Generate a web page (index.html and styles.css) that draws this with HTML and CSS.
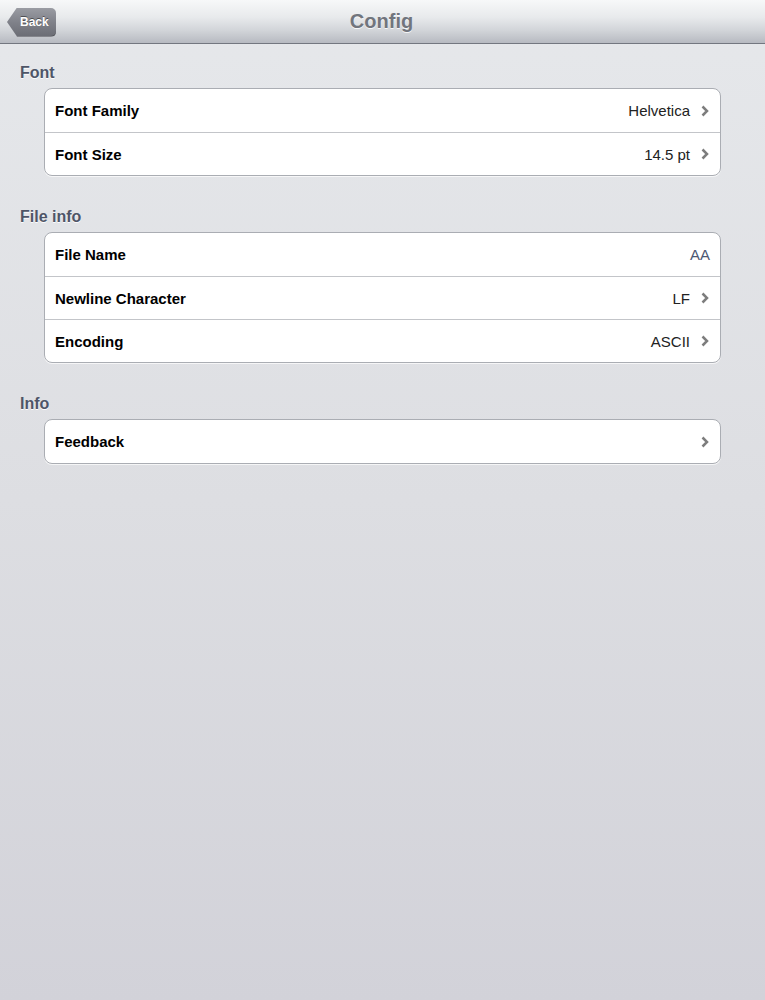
FILE: index.html
```html
<!DOCTYPE html>
<html>
<head>
<meta charset="utf-8">
<link rel="stylesheet" href="styles.css">
</head>
<body>
<div class="page">
  <header class="navbar">
    <div class="nav-left"><div class="back-btn">Back</div></div>
    <div class="nav-title">Config</div>
    <div class="nav-right"></div>
  </header>
  <main class="content">
    <section class="section">
      <div class="section-header">Font</div>
      <div class="group">
        <div class="row"><span class="label">Font Family</span><span class="value">Helvetica</span><svg class="chev" viewBox="0 0 8 12"><polyline points="1.5,1.5 6,6 1.5,10.5"/></svg></div>
        <div class="row"><span class="label">Font Size</span><span class="value">14.5 pt</span><svg class="chev" viewBox="0 0 8 12"><polyline points="1.5,1.5 6,6 1.5,10.5"/></svg></div>
      </div>
    </section>
    <section class="section">
      <div class="section-header">File info</div>
      <div class="group">
        <div class="row"><span class="label">File Name</span><span class="value detail">AA</span></div>
        <div class="row"><span class="label">Newline Character</span><span class="value">LF</span><svg class="chev" viewBox="0 0 8 12"><polyline points="1.5,1.5 6,6 1.5,10.5"/></svg></div>
        <div class="row"><span class="label">Encoding</span><span class="value">ASCII</span><svg class="chev" viewBox="0 0 8 12"><polyline points="1.5,1.5 6,6 1.5,10.5"/></svg></div>
      </div>
    </section>
    <section class="section">
      <div class="section-header">Info</div>
      <div class="group">
        <div class="row"><span class="label">Feedback</span><span class="value"></span><svg class="chev" viewBox="0 0 8 12"><polyline points="1.5,1.5 6,6 1.5,10.5"/></svg></div>
      </div>
    </section>
  </main>
</div>
</body>
</html>
```

FILE: styles.css
```css
html, body {
  margin: 0;
  padding: 0;
}
body {
  font-family: "Liberation Sans", Arial, sans-serif;
  background: linear-gradient(to bottom, #e6e8eb 0%, #dddee2 50%, #d2d2d9 100%);
  width: 765px;
  height: 1000px;
  overflow: hidden;
}
.page {
  width: 765px;
  height: 1000px;
  display: flex;
  flex-direction: column;
}
.navbar {
  height: 43px;
  border-bottom: 1px solid #737780;
  background: linear-gradient(to bottom, #f7f8f9 0%, #e8eaec 40%, #d2d5d9 70%, #b7bac1 100%);
  display: grid;
  grid-template-columns: 1fr auto 1fr;
  align-items: center;
}
.nav-left {
  padding-left: 7px;
  display: flex;
  align-items: center;
}
.back-btn {
  height: 29px;
  width: 49px;
  box-sizing: border-box;
  padding-left: 13px;
  margin-top: 1px;
  display: flex;
  align-items: center;
  color: #fff;
  font-weight: bold;
  font-size: 12px;
  text-shadow: 0 -1px 0 rgba(0,0,0,0.45);
  background: linear-gradient(to bottom, #9a9ca3 0%, #7f8189 50%, #6a6c74 100%);
  border-radius: 5px;
  clip-path: polygon(10px 0, 100% 0, 100% 100%, 10px 100%, 0 50%);
  box-shadow: inset 0 -1px 0 rgba(0,0,0,0.25);
}
.nav-title {
  font-size: 20px;
  font-weight: bold;
  color: #71757d;
  text-shadow: 0 1px 0 rgba(255,255,255,0.8);
  margin-left: -2px;
}
.content {
  display: flex;
  flex-direction: column;
  gap: 12px;
}
.section-header {
  height: 44px;
  box-sizing: border-box;
  padding: 19px 0 0 20px;
  font-size: 16px;
  line-height: 20px;
  font-weight: bold;
  color: #4e5567;
  text-shadow: 0 1px 0 rgba(255,255,255,0.9);
}
.group {
  margin: 0 44px;
  background: #fff;
  border: 1px solid #aaadb3;
  border-radius: 8px;
  box-shadow: 0 1px 0 rgba(255,255,255,0.7);
}
.row {
  height: 43px;
  box-sizing: border-box;
  display: flex;
  align-items: center;
  padding: 0 10px;
  font-size: 15px;
}
.row + .row {
  border-top: 1px solid #c3c5c9;
}
.label {
  font-weight: bold;
  color: #000;
  flex: 1;
}
.value {
  color: #222;
}
.value.detail {
  color: #4d5874;
}
.chev {
  width: 8px;
  height: 12px;
  margin-left: 11px;
  margin-right: 1px;
  fill: none;
  stroke: #7d7d7d;
  stroke-width: 2.5;
  stroke-linecap: butt;
  stroke-linejoin: miter;
}
```
